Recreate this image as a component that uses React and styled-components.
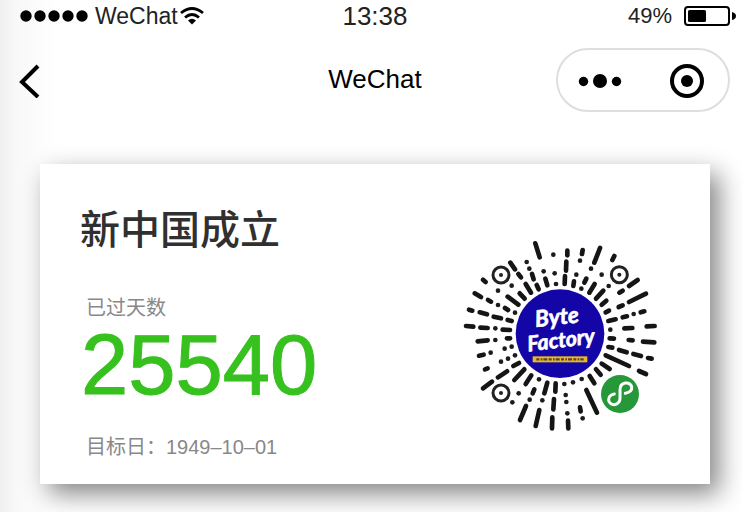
import React from "react";
import styled, { createGlobalStyle } from "styled-components";

const GlobalStyle = createGlobalStyle`
  * { box-sizing: border-box; }
  body {
    margin: 0;
    background: #fff;
    font-family: "Liberation Sans", "Noto Sans CJK SC", sans-serif;
    overflow-x: hidden;
  }
`;

const Screen = styled.main`
  min-height: 100vh;
  padding-bottom: 28px;
  background: linear-gradient(to right, #f0f0f0 0, #f8f8f8 16px, #fdfdfd 46px, #fff 64px);
`;

const Columns = styled.header`
  display: grid;
  grid-template-columns: 1fr auto 1fr;
  align-items: center;
`;

const StatusBar = styled(Columns)`
  height: 32px;
  padding: 0 6px 0 20px;
  color: #222;
  font-size: 24px;
  line-height: 32px;
`;

const Carrier = styled.div`
  display: flex;
  align-items: center;
`;

const CarrierName = styled.span`
  margin: 0 2px 0 6px;
  font-size: 23px;
`;

const Clock = styled.time`
  margin-right: 6px;
  font-size: 26px;
  line-height: 30px;
`;

const Battery = styled.div`
  display: flex;
  align-items: center;
  justify-content: flex-end;
  gap: 12px;
  font-size: 22px;
`;

const NavBar = styled(Columns)`
  height: 96px;
  padding: 0 12px 0 16px;
`;

const Title = styled.h1`
  margin: 0 0 2px 4px;
  font-size: 26px;
  font-weight: 400;
  line-height: 32px;
  color: #000;
`;

const IconButton = styled.button`
  display: flex;
  align-items: center;
  justify-content: center;
  width: ${(p) => p.$width}px;
  height: 60px;
  padding: 0;
  border: 0;
  background: none;
  cursor: pointer;
`;

const Capsule = styled.div`
  justify-self: end;
  display: flex;
  gap: 4px;
  width: 174px;
  height: 64px;
  border: 2px solid #dedede;
  border-radius: 32px;
  background: #fff;
`;

const Card = styled.article`
  display: flex;
  justify-content: space-between;
  margin: 36px 32px 0 40px;
  min-height: 320px;
  background: #fff;
  box-shadow: 9px 10px 24px 0 rgba(0, 0, 0, 0.48);
`;

const Details = styled.section`
  display: flex;
  flex-direction: column;
  padding: 36px 0 0 40px;
`;

const EventName = styled.h2`
  margin: 0;
  font-size: 40px;
  font-weight: 500;
  line-height: 60px;
  color: #303030;
`;

const Caption = styled.p`
  margin: ${(p) => p.$top}px 0 0 6px;
  font-size: 20px;
  line-height: 28px;
  color: #888;
`;

const DayCount = styled.strong`
  margin-left: 1px;
  font-size: 85px;
  font-weight: 400;
  line-height: 86px;
  color: #36c11e;
  -webkit-text-stroke: 1px #36c11e;
`;

const CodeImage = styled.svg`
  flex: none;
  width: 210px;
  height: 205px;
  margin: 66px 45px 0 0;
`;

const rays = [
  [241,40,254,82],[166,98,180,118],[231,132,236,148],[190,132,198,142],[271,146,277,166],
  [212,162,228,188],[245,165,251,178],[194,190,209,206],[158,200,190,224],[84,149,92,156],
  [59,190,78,201],[99,210,108,215],[150,234,159,240],[42,239,52,242],[74,247,96,253],
  [116,260,138,265],[158,270,170,273],[33,288,55,290],[76,293,98,294],[143,299,165,300],
  [337,62,337,76],[383,60,381,72],[435,54,418,98],[478,78,472,90],[334,95,333,122],
  [330,138,329,162],[357,154,355,168],[394,146,388,158],[419,162,403,188],[445,182,423,206],
  [454,212,440,224],[548,150,522,168],[503,182,493,188],[573,191,522,216],[503,226,491,231],
  [462,242,452,247],[568,244,557,247],[516,259,503,262],[482,268,460,273],[575,289,599,288],
  [508,295,532,294],[68,334,98,331],[156,325,165,325],[72,377,86,374],[90,418,98,415],
  [129,442,156,424],[175,408,192,399],[84,475,111,455],[178,450,208,418],[212,462,229,436],
  [238,478,233,490],[277,458,268,490],[213,528,195,570],[253,540,242,588],[302,460,301,485],
  [297,507,295,538],[292,562,291,595],[339,572,340,595],[375,532,377,544],[394,480,426,548],
  [404,438,418,460],[423,418,437,434],[440,401,464,417],[452,376,522,408],[460,351,472,353],
  [492,360,515,367],[535,372,558,378],[579,384,590,386],[552,423,573,432],[464,325,477,326],
  [521,330,533,331],[564,335,598,337],
];

const dots = [
  [295,74],[215,96],[223,116],[266,124],[299,130],[303,162],[170,167],[129,182],[129,225],
  [180,248],[121,295],[375,92],[408,116],[440,134],[364,134],[379,176],[461,168],[536,252],
  [466,299],[121,330],[149,356],[170,350],[107,368],[138,395],[159,386],[180,376],[252,448],
  [224,509],[262,511],[191,490],[172,517],[328,462],[354,457],[380,447],[332,495],[334,516],
  [337,550],[383,565],
];

const rings = [[138,135],[493,134],[138,489]];

function MiniProgramCode() {
  return (
    <CodeImage viewBox="0 0 630 615" role="img" aria-label="Byte Factory">
      <g stroke="#151515" strokeWidth="14" strokeLinecap="round">
        {rays.map(([x1, y1, x2, y2]) => (
          <line key={`${x1}-${y1}`} x1={x1} y1={y1} x2={x2} y2={y2} />
        ))}
      </g>
      <g fill="#1c1c1c">
        {dots.map(([x, y]) => <circle key={`${x}-${y}`} cx={x} cy={y} r="7" />)}
      </g>
      {rings.map(([x, y]) => (
        <g key={`${x}-${y}`}>
          <circle cx={x} cy={y} r="24" fill="none" stroke="#222" strokeWidth="9" />
          <circle cx={x} cy={y} r="6" fill="#222" />
        </g>
      ))}
      <circle cx="315" cy="311" r="133" fill="#1405a6" />
      <g fill="#fff" stroke="#fff" strokeWidth="2" strokeLinejoin="round" fontFamily="Lato, sans-serif" fontWeight="700" fontStyle="italic" textAnchor="middle">
        <text x="306" y="284" fontSize="68" transform="rotate(-6 306 264)">Byte</text>
        <text x="318" y="352" fontSize="64" transform="rotate(-7 318 330)">Factory</text>
      </g>
      <rect x="233" y="379" width="164" height="18" fill="#e8b923" />
      <path d="M244 388H386" stroke="#594331" strokeWidth="7" strokeDasharray="9 4 5 3 12 4" />
      <circle cx="495" cy="492" r="57" fill="#27983a" />
      <path d="M511 490C540 484 533 456 511 459C499 461 495 470 495 479V505C495 516 488 522 479 524C456 524 454 496 478 492" fill="none" stroke="#fff" strokeWidth="9" strokeLinecap="round" />
    </CodeImage>
  );
}

export default function App() {
  return (
    <>
      <GlobalStyle />
      <Screen>
        <StatusBar>
          <Carrier>
            <svg width="69" height="12" viewBox="0 0 69 12" aria-hidden="true">
              {[6, 20, 34, 48, 62].map((x) => <circle key={x} cx={x} cy="6" r="5.7" />)}
            </svg>
            <CarrierName>WeChat</CarrierName>
            <svg width="24" height="18" viewBox="0 0 24 18" fill="none" stroke="#000" strokeWidth="2.8" aria-hidden="true">
              <path d="M1 6Q12-3 23 6M5 10.500Q12 4.500 19 10.500" />
              <path d="M8 13.500Q12 10 16 13.500L12 17.500Z" fill="#000" stroke="none" />
            </svg>
          </Carrier>
          <Clock>13:38</Clock>
          <Battery>
            <span>49%</span>
            <svg width="52" height="20" viewBox="0 0 52 20" aria-hidden="true">
              <rect x="1" y="1" width="44" height="18" rx="3" fill="none" stroke="#000" strokeWidth="2" />
              <rect x="4" y="4" width="18" height="12" rx="1.500" />
              <path d="M48 6Q52 7 52 10T48 14Z" />
            </svg>
          </Battery>
        </StatusBar>
        <NavBar>
          <IconButton type="button" $width={28} aria-label="Back">
            <svg width="22" height="36" viewBox="0 0 22 36" fill="none" stroke="#000" strokeWidth="4">
              <path d="M19 4L3 20L19 35" />
            </svg>
          </IconButton>
          <Title>WeChat</Title>
          <Capsule>
            <IconButton type="button" $width={84} aria-label="More">
              <svg width="44" height="16" viewBox="0 0 44 16">
                <circle cx="5.500" cy="9.500" r="4.700" />
                <circle cx="22" cy="9" r="7" />
                <circle cx="38.500" cy="9.500" r="4.700" />
              </svg>
            </IconButton>
            <IconButton type="button" $width={82} aria-label="Close">
              <svg width="36" height="36" viewBox="0 0 36 36">
                <circle cx="18" cy="19" r="15" fill="none" stroke="#000" strokeWidth="4" />
                <circle cx="18" cy="19" r="6" />
              </svg>
            </IconButton>
          </Capsule>
        </NavBar>
        <Card>
          <Details>
            <EventName>新中国成立</EventName>
            <Caption $top={34}>已过天数</Caption>
            <DayCount>25540</DayCount>
            <Caption $top={25}>目标日：1949–10–01</Caption>
          </Details>
          <MiniProgramCode />
        </Card>
      </Screen>
    </>
  );
}
